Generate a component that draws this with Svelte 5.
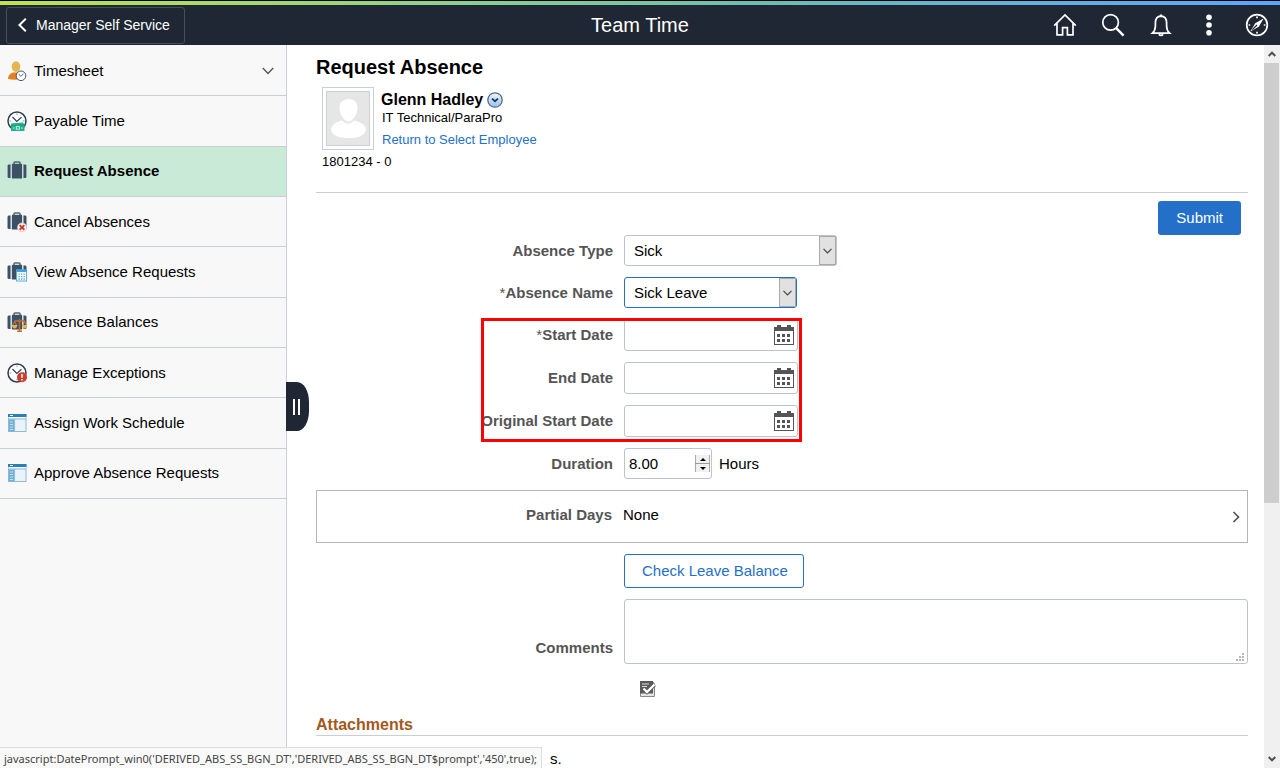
<script>
  const menu = [
    { label: 'Timesheet', icon: 'person', expandable: true },
    { label: 'Payable Time', icon: 'pay' },
    { label: 'Request Absence', icon: 'case', active: true },
    { label: 'Cancel Absences', icon: 'case-cancel' },
    { label: 'View Absence Requests', icon: 'case-calendar' },
    { label: 'Absence Balances', icon: 'case-scale' },
    { label: 'Manage Exceptions', icon: 'exception' },
    { label: 'Assign Work Schedule', icon: 'window' },
    { label: 'Approve Absence Requests', icon: 'window' },
  ]

  let dates = $state([
    { id: 'start', label: 'Start Date', required: true, value: '' },
    { id: 'end', label: 'End Date', value: '' },
    { id: 'original', label: 'Original Start Date', value: '' },
  ])
  let absenceType = $state('Sick')
  let absenceName = $state('Sick Leave')
  let duration = $state('8.00')
  let comments = $state('')
  let collapsed = $state(false)

  function step(n) {
    duration = Math.max(0, (parseFloat(duration) || 0) + n).toFixed(2)
  }
</script>

{#snippet clock()}
  <circle cx="10" cy="10" r="9" fill="#fff" stroke="#2f4050" stroke-width="1.5" />
  <path d="M5.5 6 L9.8 10.400 L14.500 6.300" fill="none" stroke="#2f4050" stroke-width="1.200" />
  <path d="M10 2.400v1.800M2.500 10h1.800M15.700 10h1.800M10 15.800v1.800" stroke="#8b98a3" stroke-width="1" />
{/snippet}

{#snippet suitcase()}
  <path d="M7 4V1.8Q7 1 7.8 1H12.2Q13 1 13 1.8V4" fill="none" stroke="#53656f" stroke-width="1.5" />
  <path d="M5 2.800H15V17.500H5Z" fill="#3d5166" />
  <path d="M0.5 5Q0.5 3.6 2 3.6H3.6V17.1H2Q0.5 17.1 0.5 15.700Z" fill="#3d5166" />
  <path d="M19.5 5Q19.5 3.6 18 3.6H16.4V17.1H18Q19.5 17.1 19.5 15.700Z" fill="#3d5166" />
  <path d="M0.5 5v11M19.5 5v11" stroke="#9aa7b0" stroke-width="1" />
  <path d="M4.300 3.600v13.500M15.700 3.600v13.500" stroke="#c3cbd0" stroke-width="0.800" />
{/snippet}

{#snippet menuIcon(name)}
  <svg class="menu-icon" viewBox="0 0 20 20" aria-hidden="true">
    {#if name === 'person'}
      <path d="M1 18Q1 13 6 11.4H11Q15 13 15.5 18Q8 19.6 1 18Z" fill="#e67e22" />
      <ellipse cx="9" cy="5.600" rx="4.300" ry="5.300" fill="#e5b453" />
      <circle cx="14" cy="14.800" r="4.800" fill="#fff" stroke="#4b5966" stroke-width="1" />
      <path d="M11.600 13 L13.800 15.200 L16.500 12.900" fill="none" stroke="#4b5966" stroke-width="0.900" />
    {:else if name === 'pay'}
      {@render clock()}
      <path d="M4 12.4 L16 11.6 L17.5 14V20H4Z" fill="#1eb28e" />
      <path d="M4 14.2h13.5" stroke="#179a7a" stroke-width="0.8" />
      <rect x="9.3" y="15.6" width="3" height="2.6" fill="none" stroke="#d9f5ed" stroke-width="0.9" />
      <path d="M6 17h1.6M14 17h1.6" stroke="#d9f5ed" stroke-width="1" />
    {:else if name === 'exception'}
      {@render clock()}
      <circle cx="15" cy="14.2" r="5" fill="#cf3a2b" />
      <path d="M15 11v3.800M15 16v1.600" stroke="#fff" stroke-width="1.600" />
    {:else if name === 'window'}
      <rect x="1.5" y="1.5" width="17.5" height="17" fill="#eaf3f9" stroke="#8ebbd6" stroke-width="1" />
      <rect x="1" y="1" width="18.5" height="3" fill="#2980b9" />
      <rect x="1.5" y="4" width="17.5" height="1.200" fill="#fff" />
      <rect x="3" y="2" width="3" height="1" fill="#fff" />
      <rect x="2" y="6.4" width="5" height="12" fill="#6fb0d8" />
      <path d="M3 9h3M3 11.5h3M3 14h3M3 16.5h3" stroke="#d4e8f4" stroke-width="0.8" />
      <path d="M7.600 6v12.500M1.500 6H19" stroke="#8ebbd6" stroke-width="1" />
    {:else}
      {@render suitcase()}
      {#if name === 'case-cancel'}
        <circle cx="15" cy="15.400" r="4.500" fill="#fff" stroke="#e5b7b3" stroke-width="0.800" />
        <path d="M12.700 13.100l4.600 4.600M17.300 13.100l-4.600 4.600" stroke="#c83a2e" stroke-width="2" />
      {:else if name === 'case-calendar'}
        <rect x="9.5" y="8" width="10" height="11" fill="#fff" stroke="#5aaee0" stroke-width="1" />
        <rect x="9" y="7.500" width="11" height="2.600" fill="#43a2dc" />
        <path d="M11.500 12.200h7M11.500 14.600h7M11.500 17h7" stroke="#4aa3da" stroke-width="1.300" stroke-dasharray="1.3 1.2" />
      {:else if name === 'case-scale'}
        <path d="M12.500 7v12M7.500 9H18M10.200 19.200h4.800" stroke="#c9682b" stroke-width="1.500" />
        <path d="M7.600 9.500L5.200 14M7.600 9.500L10 14M17.600 9.500L15.400 14M17.600 9.500L19.800 14" stroke="#d39b47" stroke-width="0.700" />
        <path d="M4.800 13H10.400Q9.800 16.600 7.600 16.600T4.800 13ZM15 13H20Q19.600 16.600 17.500 16.600T15 13Z" fill="#e6b04c" />
      {/if}
    {/if}
  </svg>
{/snippet}

{#snippet arrow()}
  <span class="arrow">
    <svg width="10" height="6" viewBox="0 0 10 6" aria-hidden="true">
      <path d="M0.500 0.800L4.500 4.800L8.500 0.800" fill="none" stroke="#444" stroke-width="1.200" />
    </svg>
  </span>
{/snippet}

<div class="page">
  <div class="brand-line"></div>
  <header>
    <button class="back" type="button">
      <svg width="9" height="14" viewBox="0 0 9 14" aria-hidden="true">
        <path d="M7.8 0.8L1.4 7L7.8 13.2" fill="none" stroke="#fff" stroke-width="2" />
      </svg>
      Manager Self Service
    </button>
    <div class="title">Team Time</div>
    <div class="tools">
      <button type="button" aria-label="Home">
        <svg viewBox="0 0 24 24">
          <path d="M1.2 12.6L12 2L22.8 12.6M4 10.4V21.8H9.6V14.6H14.4V21.8H20V10.4" />
        </svg>
      </button>
      <button type="button" aria-label="Search">
        <svg viewBox="0 0 24 24">
          <circle cx="9.6" cy="9.4" r="7.8" />
          <path d="M15.2 15.2L22.6 22.6" stroke-width="2.4" />
        </svg>
      </button>
      <button type="button" aria-label="Notifications">
        <svg viewBox="0 0 24 24">
          <path d="M3.400 20.200Q6.400 17.600 6.400 13V10Q6.400 3.400 12 3.200Q17.600 3.400 17.600 10V13Q17.600 17.600 20.600 20.200Z" />
          <path d="M10.800 2.400h2.400M9.800 21.400Q12 23.600 14.200 21.400" />
        </svg>
      </button>
      <button type="button" aria-label="Actions">
        <svg viewBox="0 0 24 24">
          <g fill="#fff" stroke="none">
            <circle cx="12" cy="4.2" r="2.8" />
            <circle cx="12" cy="12" r="2.8" />
            <circle cx="12" cy="19.8" r="2.8" />
          </g>
        </svg>
      </button>
      <button type="button" aria-label="NavBar">
        <svg viewBox="0 0 24 24">
          <circle cx="12" cy="12" r="10.3" />
          <path d="M18.600 5.400L13.800 13.800L5.400 18.600L10.200 10.200Z" fill="#fff" stroke="none" />
          <path d="M7.400 16.600L12 12" stroke="#1e2733" stroke-width="1.200" />
          <path d="M12 3.600v1.600M12 18.800v1.600M3.600 12h1.600M18.800 12h1.600" />
        </svg>
      </button>
    </div>
  </header>

  <div class="body">
    <nav class:collapsed>
      <ul>
        {#each menu as item}
          <li class:active={item.active}>
            <a href="#top">
              {@render menuIcon(item.icon)}
              <span>{item.label}</span>
              {#if item.expandable}
                <svg class="expand" width="12" height="8" viewBox="0 0 12 8" aria-hidden="true">
                  <path d="M0.8 1L6 6.4L11.2 1" fill="none" stroke="#555" stroke-width="1.4" />
                </svg>
              {/if}
            </a>
          </li>
        {/each}
      </ul>
      <button class="handle" type="button" aria-label="Toggle menu" onclick={() => (collapsed = !collapsed)}>
        <i></i><i></i>
      </button>
    </nav>

    <main>
      <h1>Request Absence</h1>
      <section class="employee">
        <div class="photo">
          <svg viewBox="0 0 44 55" aria-hidden="true">
            <rect x="0.5" y="0.5" width="43" height="54" fill="#e6e6e6" stroke="#cfcfcf" />
            <path d="M5 39Q5 32 16 29.5Q22 36 28 29.5Q40 32 40 39Q38 47 22.5 47Q7 47 5 39Z" fill="#fff" />
            <path d="M22.500 8C28 8 31.500 11.500 31.500 17C31.500 23 27 30.500 22.500 30.500C18 30.500 13.500 23 13.500 17C13.500 11.500 17 8 22.500 8Z" fill="#fff" />
          </svg>
        </div>
        <div class="who">
          <div class="name">
            Glenn Hadley
            <button type="button" aria-label="Related actions">
              <svg width="16" height="16" viewBox="0 0 16 16">
                <defs>
                  <linearGradient id="orb" x1="0" y1="0" x2="0" y2="1">
                    <stop offset="0" stop-color="#f2f8fd" />
                    <stop offset="1" stop-color="#8fc4f2" />
                  </linearGradient>
                </defs>
                <circle cx="8" cy="8" r="7.2" fill="url(#orb)" stroke="#5b6b7a" stroke-width="1.3" />
                <path d="M5 6.600L8 9.200L11 6.600" fill="none" stroke="#1e3550" stroke-width="1.800" />
              </svg>
            </button>
          </div>
          <div class="job">IT Technical/ParaPro</div>
          <a href="#top">Return to Select Employee</a>
        </div>
        <div class="empl-id">1801234 - 0</div>
      </section>

      <div class="submit-row">
        <button class="submit" type="button">Submit</button>
      </div>

      <form>
        <div class="row">
          <label for="type">Absence Type</label>
          <div class="select type">
            <select id="type" bind:value={absenceType}>
              <option>Sick</option>
            </select>
            {@render arrow()}
          </div>
        </div>
        <div class="row">
          <label for="name"><span class="req">*</span>Absence Name</label>
          <div class="select focus">
            <select id="name" bind:value={absenceName}>
              <option>Sick Leave</option>
            </select>
            {@render arrow()}
          </div>
        </div>

        <div class="dates">
          {#each dates as d}
            <div class="row">
              <label for={d.id}>{#if d.required}<span class="req">*</span>{/if}{d.label}</label>
              <div class="date">
                <input id={d.id} type="text" bind:value={d.value} />
                <button type="button" aria-label="Choose {d.label}">
                  <svg width="20" height="20" viewBox="0 0 20 20" shape-rendering="crispEdges">
                    <path d="M0 2H3V0H7V2H13V0H17V2H20V20H0ZM1 6V19H19V6Z" fill="#555" fill-rule="evenodd" />
                    <path d="M3 9h3v3H3zM8 9h3v3H8zM13 9h3v3H13zM3 14h3v3H3zM8 14h3v3H8zM13 14h3v3H13z" fill="#555" />
                  </svg>
                </button>
              </div>
            </div>
          {/each}
          <div class="highlight"></div>
        </div>

        <div class="row">
          <label for="duration">Duration</label>
          <div class="duration">
            <div class="spin">
              <input id="duration" type="text" bind:value={duration} />
              <div class="steps">
                <button type="button" aria-label="Increase" onclick={() => step(1)}>
                  <svg width="6" height="3" viewBox="0 0 6 3"><path d="M0 3L3 0L6 3Z" /></svg>
                </button>
                <button type="button" aria-label="Decrease" onclick={() => step(-1)}>
                  <svg width="6" height="3" viewBox="0 0 6 3"><path d="M0 0L3 3L6 0Z" /></svg>
                </button>
              </div>
            </div>
            Hours
          </div>
        </div>

        <button class="partial" type="button">
          <b>Partial Days</b>
          <span>None</span>
          <svg width="8" height="12" viewBox="0 0 8 12" aria-hidden="true">
            <path d="M1.500 1L6.500 6L1.500 11" fill="none" stroke="#555" stroke-width="1.700" />
          </svg>
        </button>

        <div class="row">
          <span></span>
          <button class="check" type="button">Check Leave Balance</button>
        </div>

        <div class="row comments">
          <label for="comments">Comments</label>
          <div class="area">
            <textarea id="comments" bind:value={comments}></textarea>
            <svg width="8" height="8" viewBox="0 0 8 8" shape-rendering="crispEdges" aria-hidden="true">
              <path d="M6 0h2v2H6zM3 3h2v2H3zM6 3h2v2H6zM0 6h2v2H0zM3 6h2v2H3zM6 6h2v2H6z" fill="#b8b8b8" />
            </svg>
          </div>
        </div>

        <div class="row">
          <span></span>
          <button class="spell" type="button" aria-label="Spell check comments">
            <svg width="16" height="16" viewBox="0 0 16 16">
              <path d="M0.500 0.500H12.500L14.500 2.500V15.500H0.500Z" fill="#e4e4e4" stroke="#888" />
              <path d="M0 0H13V12.500H0Z" fill="#5a5a5a" />
              <path d="M2 3h7M2 5.500h5" stroke="#ddd" stroke-width="1.200" />
              <path d="M3.500 7.500L7 11L14.500 3.500" fill="none" stroke="#555" stroke-width="4" />
              <path d="M3.500 7.500L7 11L14.500 3.500" fill="none" stroke="#fff" stroke-width="2.400" />
            </svg>
          </button>
        </div>
      </form>

      <h2>Attachments</h2>
      <p>s.</p>
    </main>

    <div class="scrollbar" aria-hidden="true">
      <svg width="8" height="6" viewBox="0 0 8 6"><path d="M0.700 5L4 1.700L7.300 5" /></svg>
      <div class="track"><div class="thumb"></div></div>
      <svg width="8" height="6" viewBox="0 0 8 6"><path d="M0.700 1L4 4.300L7.300 1" /></svg>
    </div>
  </div>

  <div class="status">javascript:DatePrompt_win0('DERIVED_ABS_SS_BGN_DT','DERIVED_ABS_SS_BGN_DT$prompt','450',true);</div>
</div>

<style>
  :global(body) {
    background: #fff;
  }
  .page {
    position: relative;
    display: flex;
    flex-direction: column;
    height: 100vh;
    overflow: hidden;
    font: 15px/18px 'Liberation Sans', Arial, sans-serif;
    color: #000;
  }
  .page * {
    box-sizing: border-box;
  }
  button,
  input,
  select,
  textarea {
    margin: 0;
    padding: 0;
    border: 0;
    background: none;
    font: inherit;
    color: inherit;
    outline: 0;
  }
  button {
    cursor: pointer;
  }
  svg {
    display: block;
    flex: none;
  }
  a {
    color: #2470c9;
    text-decoration: none;
  }

  .brand-line {
    flex: none;
    height: 5px;
    border-top: 1px solid #000;
    background: linear-gradient(90deg, #bde44c, #8dd08c 35%, #6cbcb4 60%, #5aa5ff);
  }
  header {
    display: grid;
    grid-template-columns: 1fr auto 1fr;
    align-items: center;
    flex: none;
    height: 40px;
    padding: 0 6px;
    background: #1e2733;
    color: #fff;
  }
  .back {
    display: flex;
    align-items: center;
    justify-self: start;
    gap: 9px;
    height: 37px;
    padding: 0 14px 0 11px;
    border: 1px solid #46505c;
    border-radius: 3px;
    font-size: 14px;
  }
  .title {
    font-size: 20px;
    line-height: 24px;
  }
  .tools {
    display: flex;
    justify-content: flex-end;
    gap: 24px;
    padding-right: 5px;
  }
  .tools svg {
    width: 24px;
    height: 24px;
    fill: none;
    stroke: #fff;
    stroke-width: 1.7;
  }

  .body {
    display: flex;
    flex: 1;
    min-height: 0;
  }
  nav {
    position: relative;
    flex: none;
    width: 287px;
    padding-top: 1px;
    border-right: 1px solid #caced6;
    background: #f8f8f8;
  }
  nav.collapsed {
    width: 1px;
  }
  .collapsed ul {
    display: none;
  }
  ul {
    display: grid;
    grid-auto-rows: 1fr;
    height: 453px;
    margin: 0;
    padding: 0;
    list-style: none;
  }
  li {
    display: flex;
    border-bottom: 1px solid #caced6;
  }
  li a {
    display: flex;
    align-items: center;
    flex: 1;
    gap: 7px;
    padding: 0 12px 0 7px;
    color: #000;
  }
  .active {
    background: #c9ead7;
    font-weight: bold;
  }
  .menu-icon {
    width: 20px;
    height: 20px;
  }
  .expand {
    margin-left: auto;
  }
  .handle {
    position: absolute;
    top: 337px;
    left: 100%;
    display: flex;
    align-items: center;
    justify-content: center;
    gap: 3px;
    width: 23px;
    height: 49px;
    padding-right: 2px;
    border-radius: 0 12px 12px 0 / 0 20px 20px 0;
    background: #1e2733;
  }
  .handle i {
    width: 2px;
    height: 16px;
    background: #fff;
  }

  main {
    flex: 1;
    min-width: 0;
    padding: 10px 16px 0 29px;
    overflow: hidden;
  }
  h1 {
    margin: 0 0 8px;
    font-size: 20px;
    line-height: 24px;
  }
  .employee {
    display: grid;
    grid-template-columns: auto 1fr;
    column-gap: 8px;
    padding: 0 0 21px 6px;
    border-bottom: 1px solid #ccc;
    font-size: 13px;
  }
  .photo {
    width: 52px;
    height: 63px;
    padding: 3px;
    border: 1px solid #caced6;
  }
  .photo svg {
    width: 44px;
    height: 55px;
  }
  .who {
    padding-top: 4px;
  }
  .name {
    display: flex;
    align-items: center;
    gap: 4px;
    margin-left: -1px;
    font-size: 16px;
    font-weight: bold;
  }
  .who a {
    display: inline-block;
    margin-top: 4px;
  }
  .empl-id {
    grid-column: 1 / -1;
    padding-top: 3px;
  }
  .submit-row {
    display: flex;
    justify-content: flex-end;
    padding: 8px 7px 0 0;
  }
  .submit {
    height: 34px;
    padding: 0 18px;
    border-radius: 3px;
    background: #2470c9;
    color: #fff;
  }

  form,
  .dates {
    display: flex;
    flex-direction: column;
    gap: 11px;
  }
  .row {
    display: grid;
    grid-template-columns: 297px 1fr;
    align-items: center;
    justify-items: start;
    column-gap: 11px;
  }
  label,
  .partial b {
    justify-self: end;
    color: #555;
    font-weight: bold;
  }
  .req {
    font-weight: normal;
  }
  .select,
  .date {
    position: relative;
    width: 173px;
    height: 31px;
    border: 1px solid #bcc3cc;
    border-radius: 3px;
    background: #fff;
  }
  .type {
    width: 213px;
  }
  .focus {
    border-color: #2470c9;
  }
  select {
    width: 100%;
    height: 100%;
    padding: 0 24px 0 9px;
    appearance: none;
  }
  .arrow {
    position: absolute;
    top: 0;
    right: 0;
    bottom: 0;
    display: flex;
    align-items: center;
    justify-content: center;
    width: 17px;
    border: 1px solid #a9a9a9;
    background: #e1e1e1;
    pointer-events: none;
  }
  .dates {
    position: relative;
  }
  .date {
    display: flex;
    align-items: center;
    width: 174px;
    height: 32px;
    padding-right: 3px;
  }
  .date input {
    flex: 1;
    min-width: 0;
    height: 100%;
    padding-left: 4px;
  }
  /* red box around the fields to fill in */
  .highlight {
    position: absolute;
    top: -1px;
    bottom: -5px;
    left: 165px;
    width: 321px;
    border: 3px solid #f00;
    pointer-events: none;
  }
  .duration {
    display: flex;
    align-items: center;
    gap: 7px;
  }
  .spin {
    display: flex;
    align-items: center;
    width: 88px;
    height: 31px;
    padding: 0 1px 0 4px;
    border: 1px solid #bcc3cc;
    border-radius: 3px;
  }
  .spin input {
    flex: 1;
    min-width: 0;
  }
  .steps {
    display: grid;
    gap: 1px;
    width: 15px;
    background: #999;
  }
  .steps button {
    display: flex;
    align-items: center;
    justify-content: center;
    height: 8px;
    border: 1px solid #aaa;
    border-width: 0 1px;
    background: #f0f0f0;
  }
  .partial {
    display: grid;
    grid-template-columns: 295px 1fr auto;
    align-items: center;
    column-gap: 11px;
    height: 53px;
    padding-right: 7px;
    border: 1px solid #b5b5b5;
    text-align: left;
  }
  .partial b,
  .partial span {
    padding-bottom: 3px;
  }
  .check {
    height: 34px;
    padding: 0 15px 0 17px;
    border: 1px solid #2470c9;
    border-radius: 3px;
    color: #2470c9;
  }
  .comments {
    align-items: end;
  }
  .comments label {
    padding-bottom: 7px;
  }
  .area {
    position: relative;
    width: 100%;
    height: 65px;
  }
  textarea {
    display: block;
    width: 100%;
    height: 100%;
    padding: 5px;
    border: 1px solid #bcc3cc;
    border-radius: 3px;
    resize: none;
  }
  .area svg {
    position: absolute;
    right: 4px;
    bottom: 3px;
  }
  .spell {
    margin: 6px 0 0 16px;
  }
  h2 {
    margin: 18px 0 0;
    border-bottom: 1px solid #caced6;
    color: #a5581b;
    font-size: 16px;
    line-height: 20px;
  }
  p {
    margin: 14px 0 0;
    padding-left: 234px;
  }

  .scrollbar {
    display: flex;
    flex-direction: column;
    align-items: center;
    flex: none;
    gap: 6px;
    width: 16px;
    padding: 6px 0;
    background: #f0f0f0;
  }
  .scrollbar svg {
    fill: none;
    stroke: #505050;
    stroke-width: 2;
  }
  .track {
    flex: 1;
    width: 100%;
    padding-right: 1px;
  }
  .thumb {
    height: 64%;
    background: #cdcdcd;
  }

  .status {
    position: absolute;
    bottom: 0;
    left: 0;
    padding: 2px 4px 1px;
    border: 1px solid #ddd;
    border-width: 1px 1px 0 0;
    background: #f9f9f9;
    color: #444;
    font: 11px/17px 'Noto Sans', 'Open Sans', sans-serif;
    white-space: nowrap;
  }
</style>
